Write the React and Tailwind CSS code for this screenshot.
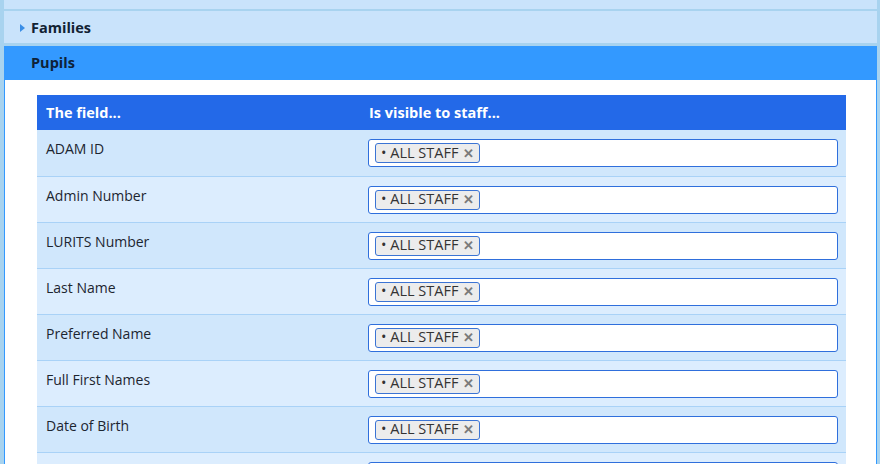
const fields = [
  'ADAM ID',
  'Admin Number',
  'LURITS Number',
  'Last Name',
  'Preferred Name',
  'Full First Names',
  'Date of Birth',
  'Gender',
];

function Tag() {
  return (
    <span className="inline-flex h-[20px] items-center gap-[5px] rounded-[3px] border border-[#3b74d4] bg-[#ececec] pl-[5px] pr-[5px] text-[14.5px] leading-none text-[#333]">
      <span>• ALL STAFF</span>
      <span className="text-[13px] font-bold text-[#7a7a7a]">✕</span>
    </span>
  );
}

function Fila({ nombre, i }) {
  return (
    <tr className={i % 2 === 0 ? 'bg-[#d0e7fc]' : 'bg-[#dcedfe]'}>
      <td className="h-[46px] border-b border-[#a9d2f7] pl-[9px] pt-[8px] align-top text-[14px] text-[#1c2530]">
        {nombre}
      </td>
      <td className="h-[46px] border-b border-[#a9d2f7] px-[8px] pt-[9px] pb-[8px] align-top">
        <div className="flex h-[28px] items-center rounded-[3px] border border-[#2f6fdc] bg-white pl-[6px]">
          <Tag />
        </div>
      </td>
    </tr>
  );
}

export default function App() {
  return (
    <div
      className="h-[464px] w-[880px] overflow-hidden bg-[#a8d3ef] pl-[4px] pr-[3px]"
      style={{ fontFamily: '"Open Sans", "Noto Sans", sans-serif' }}
    >
      <div className="h-[9px] bg-[#c9e3fb]" />
      <div className="mt-[2px] flex h-[32px] items-center bg-[#c9e3fb] pl-[16px] pt-[2px]">
        <svg width="5" height="8" viewBox="0 0 5 8" className="mr-[6px]">
          <path d="M0 0 L5 4 L0 8 Z" fill="#3a8ee6" />
        </svg>
        <span className="text-[14.5px] font-bold text-[#112233]">Families</span>
      </div>
      <div className="mt-[3px] flex h-[34px] items-center bg-[#3399ff] pl-[27px]">
        <span className="text-[14.5px] font-bold text-[#0e2238]">Pupils</span>
      </div>
      <div className="border-x border-[#3399ff] bg-white pl-[32px] pr-[30px] pt-[15px]">
        <table className="w-full border-collapse">
          <thead>
            <tr className="bg-[#2369e8] text-left text-[14.5px] font-bold text-white">
              <th className="h-[35px] w-[323px] pl-[9px] font-bold">The field...</th>
              <th className="h-[35px] pl-[9px] font-bold">Is visible to staff...</th>
            </tr>
          </thead>
          <tbody>
            {fields.map((f, i) => (
              <Fila key={f} nombre={f} i={i} />
            ))}
          </tbody>
        </table>
      </div>
    </div>
  );
}
